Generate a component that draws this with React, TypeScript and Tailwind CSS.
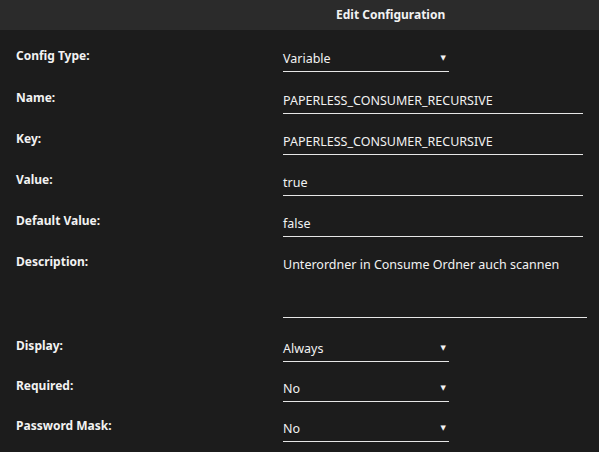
import React from "react";

const font = { fontFamily: '"Noto Sans", "DejaVu Sans", sans-serif' };

function Label({ children }: { children: React.ReactNode }) {
  return (
    <div className="w-[283px] shrink-0 pl-[16px] text-[12px] leading-[16px] font-bold text-[#f2f2f2]">
      {children}
    </div>
  );
}

function TextField({ value }: { value: string }) {
  return (
    <div className="w-[300px] h-[24px] pt-[3px] border-b border-[#e6e6e6] text-[12.5px] leading-[16px] text-[#f2f2f2]">
      {value}
    </div>
  );
}

function SelectField({ value }: { value: string }) {
  return (
    <div className="w-[166px] h-[24px] pt-[3px] border-b border-[#e6e6e6] text-[12.5px] leading-[16px] text-[#f2f2f2] flex items-start justify-between pr-[3px]">
      <span>{value}</span>
      <span className="text-[7px] leading-[14px]">▼</span>
    </div>
  );
}

function Row({ label, children, className = "" }: { label: string; children: React.ReactNode; className?: string }) {
  return (
    <div className={"flex items-start " + className}>
      <Label>{label}</Label>
      {children}
    </div>
  );
}

export default function App() {
  return (
    <div className="w-[599px] h-[452px] bg-[#1c1c1c] overflow-hidden" style={font}>
      <div className="h-[30px] bg-[#2b2b2b] flex items-center pl-[336px] text-[12px] font-bold text-[#f2f2f2]">
        Edit Configuration
      </div>
      <div className="flex flex-col pt-[18px]">
        <Row label="Config Type:">
          <SelectField value="Variable" />
        </Row>
        <Row label="Name:" className="mt-[18px]">
          <TextField value="PAPERLESS_CONSUMER_RECURSIVE" />
        </Row>
        <Row label="Key:" className="mt-[17px]">
          <TextField value="PAPERLESS_CONSUMER_RECURSIVE" />
        </Row>
        <Row label="Value:" className="mt-[17px]">
          <TextField value="true" />
        </Row>
        <Row label="Default Value:" className="mt-[17px]">
          <TextField value="false" />
        </Row>
        <Row label="Description:" className="mt-[17px]">
          <div className="w-[304px] h-[64px] pt-[3px] border-b border-[#e6e6e6] text-[12.5px] leading-[16px] text-[#f2f2f2]">
            Unterordner in Consume Ordner auch scannen
          </div>
        </Row>
        <Row label="Display:" className="mt-[20px]">
          <SelectField value="Always" />
        </Row>
        <Row label="Required:" className="mt-[16px]">
          <SelectField value="No" />
        </Row>
        <Row label="Password Mask:" className="mt-[16px]">
          <SelectField value="No" />
        </Row>
      </div>
    </div>
  );
}
